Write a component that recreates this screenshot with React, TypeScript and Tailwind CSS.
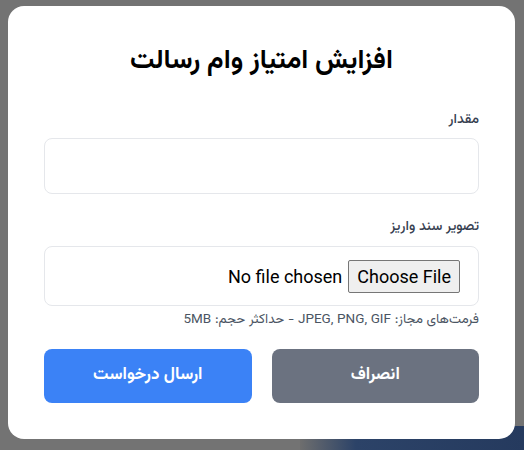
import { useState } from "react";

const FA = '"Vazirmatn", "Noto Sans Arabic", "DejaVu Sans", sans-serif';
const LATIN = 'Roboto, "Liberation Sans", Arial, sans-serif';

export default function App() {
  const [amount, setAmount] = useState("");

  return (
    <div className="relative h-[450px] w-[524px] overflow-hidden bg-[#737373]">
      {/* پس‌زمینه تیره زیر پنجره */}
      <div className="absolute bottom-0 left-[300px] h-[24px] w-[224px] bg-[linear-gradient(to_right,#6e6e6e,#2c4368_25%,#253a5e)]" />

      <div
        dir="rtl"
        className="absolute left-[8px] top-[6px] w-[507px] rounded-2xl bg-white px-9 pb-9 pt-10"
        style={{ fontFamily: FA }}
      >
        <h2 className="mb-8 text-center text-[27px] font-bold leading-8 text-black">
          افزایش امتیاز وام رسالت
        </h2>

        <label className="mb-2 block text-sm font-medium text-[#374151]">مقدار</label>
        <input
          type="text"
          value={amount}
          onChange={(e) => setAmount(e.target.value)}
          className="block h-14 w-full rounded-lg border border-[#e5e7eb] px-4 outline-none"
        />

        <label className="mb-[9px] mt-[23px] block text-sm font-medium text-[#374151]">
          تصویر سند واریز
        </label>
        <div className="flex h-[60px] w-full items-center gap-[6px] rounded-lg border border-[#e5e7eb] px-[18px]">
          <span
            className="rounded-[2px] border border-[#767676] bg-[#efefef] px-[8px] py-[4px] text-[18px] leading-[23px] text-black"
            style={{ fontFamily: LATIN }}
          >
            Choose File
          </span>
          <span className="text-[18px] text-black" style={{ fontFamily: LATIN }}>
            No file chosen
          </span>
        </div>
        <p className="mt-1 text-[13.5px] leading-5 text-[#4b5563]">
          فرمت‌های مجاز: JPEG, PNG, GIF - حداکثر حجم: 5MB
        </p>

        <div className="mt-[19px] grid grid-cols-2 gap-5">
          <button className="h-[54px] rounded-lg bg-[#6b7280] text-[17px] font-bold text-white">
            انصراف
          </button>
          <button className="h-[54px] rounded-lg bg-[#3b82f6] text-[17px] font-bold text-white">
            ارسال درخواست
          </button>
        </div>
      </div>
    </div>
  );
}
